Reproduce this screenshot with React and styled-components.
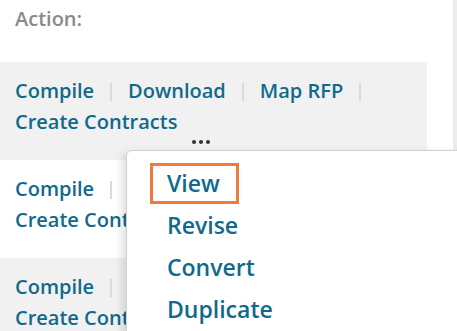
import styled, { createGlobalStyle } from 'styled-components'

const GlobalStyle = createGlobalStyle`
    html, body {
        margin: 0;
        padding: 0;
        background: #fff;
        font-family: "Open Sans", "Noto Sans", sans-serif;
    }
`

const rows = [
    { shaded: true },
    { shaded: false },
    { shaded: true },
]

const links = ['Compile', 'Download', 'Map RFP', 'Create Contracts']
const menu = ['View', 'Revise', 'Convert', 'Duplicate']

const App = () => {
    return (
        <Page>
            <GlobalStyle />
            <Panel>
                <Label>Action:</Label>
                <List>
                    {rows.map((row, i) => (
                        <Row key={i} shaded={row.shaded}>
                            <Links>
                                {links.map((l, j) => (
                                    <span key={l}>
                                        <ActionLink>{l}</ActionLink>
                                        {j < links.length - 1 && <Sep />}
                                    </span>
                                ))}
                            </Links>
                            <More>
                                <Dot /><Dot /><Dot />
                            </More>
                        </Row>
                    ))}
                </List>
            </Panel>
            <Dropdown>
                {menu.map((m, i) => (
                    <MenuItem key={m} active={i === 0}>{m}</MenuItem>
                ))}
            </Dropdown>
        </Page>
    )
}

const Page = styled.div`
    position: relative;
    width: 457px;
    height: 331px;
    overflow: hidden;
`
const Panel = styled.div`
    width: 453px;
    border-right: 4px solid #ececec;
    min-height: 331px;
`
const Label = styled.div`
    padding: 3px 15px 0;
    height: 62px;
    font-size: 20px;
    font-weight: 600;
    color: #8a8a8a;
    line-height: 31px;
    box-sizing: border-box;
`
const List = styled.div`
    width: 427px;
`
const Row = styled.div`
    height: 98px;
    box-sizing: border-box;
    padding: 13px 15px 0;
    background: ${p => p.shaded ? '#f1f1f1' : '#fff'};
`
const Links = styled.div`
    font-size: 20px;
    line-height: 31px;
    font-weight: 600;
`
const ActionLink = styled.a`
    color: #0f6a8c;
    cursor: pointer;
`
const Sep = styled.span`
    display: inline-block;
    width: 2px;
    height: 18px;
    margin: 0 16px;
    vertical-align: -3px;
    background: #d3dce2;
`
const More = styled.div`
    display: flex;
    gap: 3px;
    padding-left: 177px;
    margin-top: 1px;
    height: 8px;
    align-items: center;
`
const Dot = styled.span`
    width: 4px;
    height: 4px;
    border-radius: 50%;
    background: #333;
`
const Dropdown = styled.div`
    position: absolute;
    left: 126px;
    top: 150px;
    width: 360px;
    height: 220px;
    padding: 12px 0 0 23px;
    box-sizing: border-box;
    background: #fff;
    border: 1px solid #d0d0d0;
    border-radius: 6px;
    box-shadow: -4px 3px 8px rgba(0, 0, 0, 0.13);
`
const MenuItem = styled.div`
    display: table;
    margin-bottom: 1px;
    padding: 0 16px 0 14px;
    border: 3px solid ${p => p.active ? '#ef7a3a' : 'transparent'};
    font-size: 23px;
    line-height: 35px;
    font-weight: 600;
    color: #0f6a8c;
    cursor: pointer;
`

export default App
